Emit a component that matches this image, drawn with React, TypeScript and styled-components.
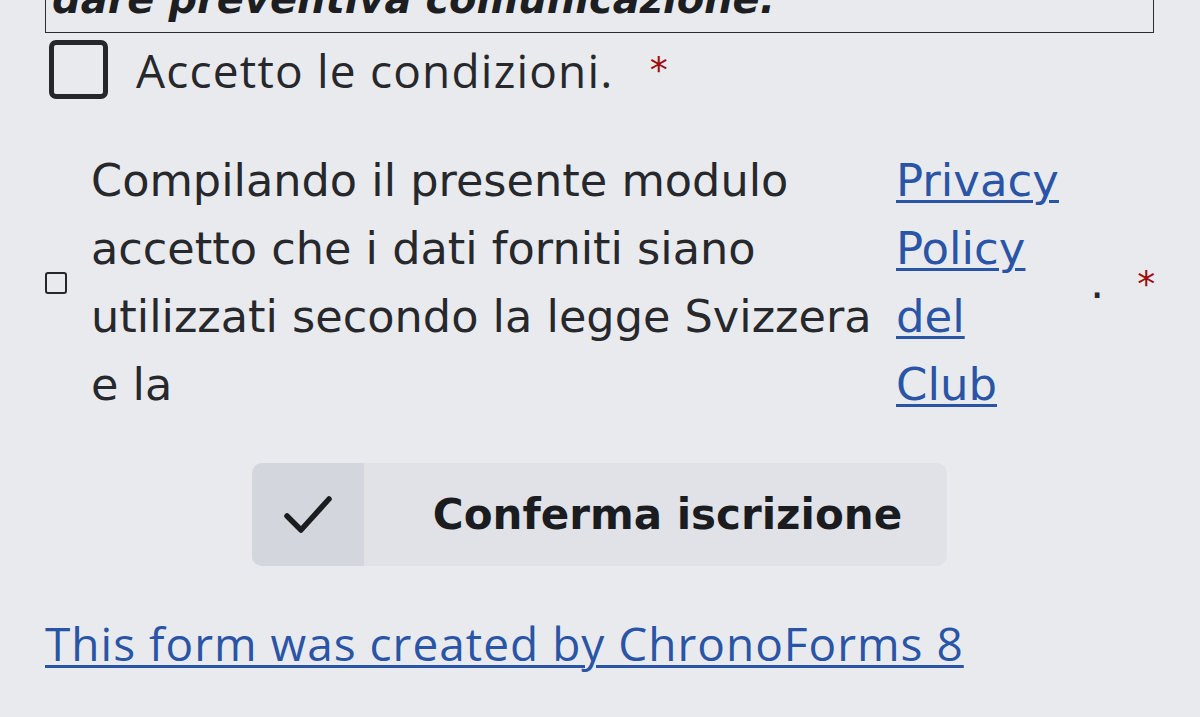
import React from "react";
import styled, { createGlobalStyle } from "styled-components";

const Global = createGlobalStyle`
  html, body { margin: 0; padding: 0; background: #e9eaee; }
  body { font-family: "DejaVu Sans", sans-serif; color: #222428; overflow: hidden; }
`;

const Page = styled.div`
  box-sizing: border-box;
  height: 717px;
  padding: 0 46px 0 45px;
  display: flex;
  flex-direction: column;
`;

const Notice = styled.div`
  margin-top: -22px;
  border: 1.5px solid #2c2d30;
  padding: 0 6px 13px;
  font: italic bold 40px/40px "DejaVu Sans", sans-serif;
  color: #1d1e21;
  white-space: nowrap;
  overflow: hidden;
`;

const ConditionRow = styled.label`
  margin-top: 7px;
  height: 59px;
  display: flex;
  align-items: center;
`;

const Box = styled.span<{ $size: number; $border: number; $radius: number; $indent?: number }>`
  box-sizing: border-box;
  flex: none;
  width: ${(p) => p.$size}px;
  height: ${(p) => p.$size}px;
  margin-left: ${(p) => p.$indent ?? 0}px;
  border: ${(p) => p.$border}px solid #25272b;
  border-radius: ${(p) => p.$radius}px;
`;

const ConditionText = styled.span`
  margin-left: 28px;
  font: 400 46px "Open Sans", sans-serif;
  letter-spacing: 1.2px;
  color: #26282c;
  white-space: nowrap;
`;

const Required = styled.span<{ $gap: number }>`
  margin-left: ${(p) => p.$gap}px;
  font: 400 36px "DejaVu Sans", sans-serif;
  color: #9c0f0f;
`;

const PrivacyRow = styled.label`
  margin-top: 48px;
  display: flex;
  align-items: center;
`;

const PrivacyText = styled.span`
  flex: none;
  width: 770px;
  margin-left: 24px;
  font: 400 44.6px/68px "DejaVu Sans", sans-serif;
  color: #26282c;
  white-space: nowrap;
`;

const PolicyLink = styled.a`
  flex: none;
  width: 175px;
  margin-left: 35px;
  font: 400 45px/68px "DejaVu Sans", sans-serif;
  color: #2a55a6;
  text-decoration: underline;
  text-decoration-thickness: 3px;
  text-underline-offset: 4px;
`;

const Dot = styled.span`
  margin-left: 19px;
  font: 400 45px/68px "DejaVu Sans", sans-serif;
  color: #26282c;
`;

const SubmitButton = styled.button`
  align-self: center;
  margin-top: 44px;
  height: 103px;
  padding: 0;
  border: none;
  border-radius: 10px;
  overflow: hidden;
  display: flex;
  background: #e0e2e7;
  cursor: pointer;
`;

const IconPart = styled.span`
  width: 112px;
  display: flex;
  align-items: center;
  justify-content: center;
  background: #d3d6dc;
`;

const ButtonLabel = styled.span`
  display: flex;
  align-items: center;
  padding: 0 45px 0 69px;
  font: bold 42px "DejaVu Sans", sans-serif;
  color: #1b1c1f;
  white-space: nowrap;
`;

const FooterLink = styled.a`
  align-self: flex-start;
  margin-top: 46px;
  font: 400 46px "Open Sans", sans-serif;
  letter-spacing: 1px;
  color: #2a55a6;
  text-decoration: underline;
  text-decoration-thickness: 3px;
  text-underline-offset: 4px;
  white-space: nowrap;
`;

export default function App() {
  return (
    <>
      <Global />
      <Page>
        <Notice>dare preventiva comunicazione.</Notice>
        <ConditionRow>
          <Box $size={59} $border={5} $radius={7} $indent={4} />
          <ConditionText>Accetto le condizioni.</ConditionText>
          <Required $gap={36}>*</Required>
        </ConditionRow>
        <PrivacyRow>
          <Box $size={22} $border={2} $radius={3} />
          <PrivacyText>
            Compilando il presente modulo
            <br />
            accetto che i dati forniti siano
            <br />
            utilizzati secondo la legge Svizzera
            <br />
            e la
          </PrivacyText>
          <PolicyLink href="#">Privacy Policy del Club</PolicyLink>
          <Dot>.</Dot>
          <Required $gap={33}>*</Required>
        </PrivacyRow>
        <SubmitButton type="button">
          <IconPart>
            <svg width="48" height="40" viewBox="0 0 48 40" fill="none">
              <path
                d="M3 21 L17 35 L45 4"
                stroke="#1b1c1f"
                strokeWidth="5.5"
                strokeLinecap="round"
                strokeLinejoin="round"
              />
            </svg>
          </IconPart>
          <ButtonLabel>Conferma iscrizione</ButtonLabel>
        </SubmitButton>
        <FooterLink href="#">This form was created by ChronoForms 8</FooterLink>
      </Page>
    </>
  );
}
